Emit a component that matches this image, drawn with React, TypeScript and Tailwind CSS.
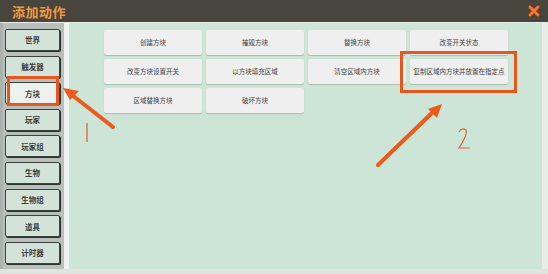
import React from "react";

const side = ["世界", "触发器", "方块", "玩家", "玩家组", "生物", "生物组", "道具", "计时器"];
const actions = [
  "创建方块",
  "摧毁方块",
  "替换方块",
  "改变开关状态",
  "改变方块设置开关",
  "以方块填充区域",
  "清空区域内方块",
  "复制区域内方块并放置在指定点",
  "区域替换方块",
  "破坏方块",
];

export default function App() {
  return (
    <div
      className="relative w-[548px] h-[274px] overflow-hidden flex flex-col bg-[#c9cfcb]"
      style={{ fontFamily: '"Noto Sans CJK SC", "Noto Sans", sans-serif' }}
    >
      {/* title bar */}
      <div className="h-[22px] flex items-center justify-between bg-[#47453d] pl-[12px] pr-[7px]">
        <span className="text-[13px] font-bold leading-none text-[#f29a3f] tracking-[0.5px]">添加动作</span>
        <svg width="14" height="14" viewBox="0 0 14 14">
          <path d="M3 3 L11 11 M11 3 L3 11" stroke="#8a3a1a" strokeWidth="4.5" strokeLinecap="round" />
          <path d="M3 3 L11 11 M11 3 L3 11" stroke="#f0793a" strokeWidth="2.6" strokeLinecap="round" />
        </svg>
      </div>
      <div className="h-[1px] bg-[#e8ece8]" />
      {/* body */}
      <div className="flex flex-1 min-h-0">
        <div className="w-[64px] bg-[#b8c0bb] border-l-[3px] border-[#aab2ad] pt-[6px] pl-[2px] flex flex-col gap-[4.6px]">
          {side.map((s) => (
            <div
              key={s}
              className={`w-[55px] h-[22px] flex items-center justify-center rounded-[2px] border border-[#3d423f] text-[7.5px] font-bold text-[#3a3e3c] shadow-[1px_1px_0_#2e3230] ${
                s === "方块" ? "bg-[#eef2ef]" : "bg-[#d3e3da]"
              }`}
            >
              {s}
            </div>
          ))}
        </div>
        <div className="w-[5px] bg-[#eef3ef]" />
        <div className="flex-1 bg-[#cde5d6] border-r-[6px] border-[#e6ece8] pt-[7px] pl-[35px]">
          <div className="grid grid-cols-[repeat(4,98px)] auto-rows-[25px] gap-x-[4px] gap-y-[4px]">
            {actions.map((a) => (
              <div
                key={a}
                className="flex items-center justify-center rounded-[2px] bg-[#efefef] text-[6.5px] whitespace-nowrap text-[#3e3e3e] shadow-[0_1px_1px_rgba(0,0,0,0.18)]"
              >
                {a}
              </div>
            ))}
          </div>
        </div>
      </div>
      <div className="h-[5px] bg-[#dfe4e0]" />

      {/* annotation overlay */}
      <div className="absolute left-[7px] top-[76px] w-[52px] h-[30px] border-[3px] border-[#e8561f]" />
      <div className="absolute left-[400px] top-[51px] w-[117px] h-[42px] border-[3px] border-[#e8561f]" />
      <svg className="absolute left-0 top-0" width="548" height="274" viewBox="0 0 548 274">
        <line x1="113" y1="127" x2="72" y2="95" stroke="#ec5a1c" strokeWidth="4" strokeLinecap="round" />
        <polygon points="63,88 79,91 70,100" fill="#ec5a1c" />
        <line x1="87" y1="123" x2="87" y2="142" stroke="#e0643a" strokeWidth="1.3" />
        <line x1="378" y1="165" x2="434" y2="111" stroke="#ec5a1c" strokeWidth="4" strokeLinecap="round" />
        <polygon points="442,104 437,118 428,109" fill="#ec5a1c" />
        <path d="M459 132 Q462 127 466 130 Q468 134 459 148 L470 148" fill="none" stroke="#d8683e" strokeWidth="1.2" />
      </svg>
    </div>
  );
}
